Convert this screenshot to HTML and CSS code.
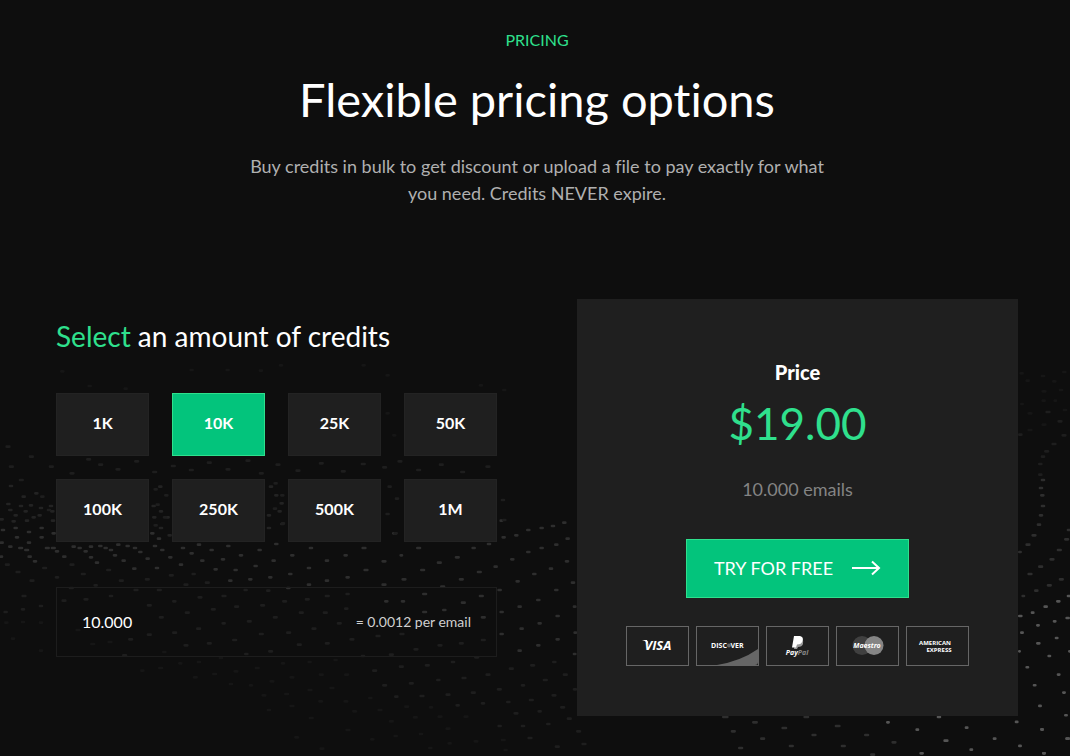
FILE: index.html
```html
<!DOCTYPE html>
<html lang="en">
<head>
    <meta charset="utf-8">
    <meta name="viewport" content="width=device-width, initial-scale=1">
    <title>Pricing</title>
    <link rel="stylesheet" href="styles.css">
</head>
<body>

<!-- dotted wave behind the section -->
<svg class="wave" viewBox="0 0 1070 756" preserveAspectRatio="xMidYMid slice" aria-hidden="true">
    <g transform="translate(0 480) scale(.3333)">
        <path class="dots dim" d="M30 18h6M68 50h6M106 40h6M22 72h6M60 78h6M90 76h6M28 90h6M74 94h6M120 84h6M150 78h6M44 106h6M98 112h6M154 94h6M2 118h6M38 124h6M78 122h6M116 106h6M156 122h6M478 20h6M458 78h6M480 94h6M460 112h6M500 112h6M826 46h6M842 70h6M810 20h6M836 94h6M804 106h6M844 132h6M804 144h6M480 144h6M506 166h6"/>
        <path class="dots mid" d="M6 150h6M44 144h6M84 156h6M122 144h6M158 160h6M2 188h6M48 172h6M84 188h6M122 172h6M28 200h6M58 204h8M76 210h8M138 204h8M156 204h8M168 214h6M2 230h4M86 230h6M102 244h6M190 230h6M218 200h6M236 204h6M254 214h6M270 200h6M270 232h6M288 248h6M298 198h6M314 204h6M330 210h6M352 194h6M342 226h6M368 242h6M380 198h6M402 204h6M418 216h6M440 236h6M400 266h6M462 198h6M484 210h6M508 232h6M468 264h6M540 254h6M546 204h6M572 220h6M594 194h6M604 242h6M632 210h6M644 268h6M666 238h6M682 198h6M704 270h6M720 226h6M764 258h6M776 210h6M818 242h6M826 192h6M874 226h6M868 282h6M924 264h6M930 204h6M978 242h6M1034 226h6M1040 292h6M978 302h6M924 314h6M808 292h6M862 324h6M748 298h6M688 302h6M454 160h6M474 176h6"/>
        <path class="dots faint" d="M18 254h8M50 276h8M130 264h8M92 302h8M168 292h6M212 254h8M246 282h8M322 270h8M360 302h8M438 298h8M510 286h8M578 282h6M554 314h8M618 308h8M284 316h6M210 324h8M404 330h8M474 330h8M734 330h6M802 332h6M68 348h8M14 396h6M66 388h6M120 378h6M188 362h8M254 358h8M330 348h6M444 376h8M520 364h6M596 352h8M668 348h8M558 398h8M636 388h8M706 380h8M784 376h8M850 364h8M918 358h8M978 348h8M1040 342h6M1036 386h6M972 398h8M900 398h8M822 412h8M744 424h8M668 430h6M592 446h8M520 458h8M480 412h8M700 480h8M780 462h8M624 490h8M862 458h8M938 446h8M1014 430h8M1052 478h8M978 490h8M894 494h8M808 514h8M736 522h6M554 496h8M444 464h8M388 478h8M370 526h8"/>
        <path class="dots ghost" d="M16 428h6M66 426h6M120 428h6M36 476h6M120 512h6M230 450h8M274 492h8M326 486h8M490 516h6M538 550h6M594 546h6M660 534h6M478 564h8M424 572h6M582 592h8M640 582h8M704 574h8M768 564h8M846 550h6M926 546h6M1004 540h6M1036 584h8M960 584h8M872 592h8M812 604h8M750 616h6M690 612h6M856 642h8M788 646h8M926 630h8M992 624h8M1034 664h8M958 664h8M872 678h8M804 690h6M930 714h8M1060 694h8M886 772h8M1040 750h8M962 806h8"/>
    </g>
    <g transform="translate(360 520) scale(.3333)">
        <path class="dots mid" d="M100 40h8M8 84h8M68 124h8M122 106h4M14 150h8M68 194h8M172 84h8M234 128h8M184 150h8M128 178h8M288 112h8M338 84h6M384 72h6M354 156h8M404 140h6M300 178h8M244 200h8M190 222h8M126 244h6M76 244h6M250 270h6M306 248h8M360 228h8M190 276h8M366 292h8M416 210h6M422 276h6M454 118h6M428 52h6M466 46h6M502 30h6M542 24h6M576 18h6M610 8h6M502 96h6M542 84h6M586 74h6M620 56h6M470 184h6M520 162h6M570 146h6M618 124h6M586 210h6M636 188h6M532 240h6M476 260h6M590 288h6M536 310h6M482 326h6M422 342h6M590 358h6M532 376h6M476 392h6M642 260h4M644 338h4M642 402h4M422 2h4"/>
        <path class="dots faint" d="M50 348h8M122 342h8M164 388h8M236 376h8M300 370h8M366 360h8M90 404h8M6 408h6M198 436h8M120 440h8M276 426h6M346 412h8M308 474h8M380 464h8M450 446h8M514 436h8M580 426h6M612 464h8M552 480h8M486 496h6M414 508h8M336 518h8M232 480h6M150 490h8M70 496h8M40 452h8M578 526h8M642 508h6M510 540h8M442 546h6M366 550h6M290 556h6M260 524h8M182 528h8M106 530h6M536 574h6M604 562h8M464 580h8M624 596h8M562 612h6M486 618h6M416 618h6M652 634h8M668 672h8M506 654h8M588 680h8"/>
        <path class="dots ghost" d="M28 534h6M56 570h8M136 560h8M210 562h6M90 604h8M162 592h8M236 590h8M314 590h8M260 626h8M180 642h6M104 648h6M34 658h6M344 664h8M426 660h8M266 670h6M208 684h6M434 690h6"/>
    </g>
    <g transform="translate(960 240) scale(.3333)">
        <path class="dots ghost" d="M182 400h6M200 422h6M246 408h6M280 424h6M310 396h6M248 454h8M300 450h6M206 520h8M184 492h4M248 482h6M312 510h6M284 482h4M206 570h8M248 554h8"/>
        <path class="dots faint" d="M260 516h8M296 544h8M308 586h8M278 612h8M256 634h8M246 650h6M238 672h6M178 584h6M238 704h6"/>
        <path class="dots mid" d="M246 720h6M240 744h6M244 766h6M246 798h6M240 826h6M234 854h6M218 886h8M200 914h8M178 936h4M316 898h8M324 870h4M294 930h8M272 958h8M238 980h8M206 1002h8M300 1018h8M264 1036h8M226 1052h6M188 1068h4"/>
        <path class="dots lit" d="M292 1084h6M254 1100h6M216 1118h4M178 1128h6M320 1134h6M282 1144h4M232 1156h4M184 1178h4M288 1194h4M232 1210h6M266 1248h4M200 1282h4M294 1304h4M222 1336h4M310 1358h4M238 1398h4M316 1426h4M168 1446h4M244 1468h4M178 1518h4M250 1540h4M320 1496h6M178 1234h1M324 1068h4M328 1234h2"/>
    </g>
    <g transform="translate(720 600) scale(.3333)">
        <path class="dots mid" d="M10 351h12M100 367h10M36 394h8M124 416h8M58 444h8M188 384h10M254 351h10M278 405h8M210 438h8M348 378h10M436 405h8M366 438h8M518 427h8M454 464h8"/>
        <path class="dots lit" d="M502 367h4M590 389h4M654 351h6M674 422h8M738 383h4M822 416h4M602 460h6M752 449h4M970 460h4M1040 416h6M965 389h3"/>
    </g>
    <g transform="translate(40 310) scale(.3333)">
        <path class="dots ghost" d="M64 184h6M146 228h6M254 236h6M452 180h6M560 180h6M660 182h6M720 166h6M968 166h6M1040 196h6M1040 310h6M1060 376h6M1320 226h6M1390 240h6"/>
        <path class="dots faint" d="M30 470h8M92 490h8M142 448h8M178 464h8M230 478h8M286 454h8M340 486h8M396 468h8M450 480h8M504 458h8M560 478h8M620 452h8M660 490h8M710 464h8M770 482h8M840 460h8M906 484h8M966 462h8M1030 472h8M1076 454h8M1132 480h8M1200 464h8M1264 486h8M1340 470h8M344 538h6M376 556h6M350 584h6M372 622h6M344 646h6M704 520h6M724 556h6M702 596h6M726 640h6M1046 530h6M1068 566h6M1040 612h6M1064 670h6M1386 570h6M1390 630h6M4 560h6M24 600h6M-60 510h8M-90 470h8M-30 440h8M-100 410h8"/>
    </g>
</svg>

<main class="pricing">
    <header class="intro">
        <p class="eyebrow">PRICING</p>
        <h1>Flexible pricing options</h1>
        <p class="lead">Buy credits in bulk to get discount or upload a file to pay exactly for what you need. Credits NEVER expire.</p>
    </header>

    <div class="columns">
        <section class="credits">
            <h2><span class="green">Select</span> an amount of credits</h2>
            <div class="amounts">
                <button type="button" class="amount">1K</button>
                <button type="button" class="amount active" aria-pressed="true">10K</button>
                <button type="button" class="amount">25K</button>
                <button type="button" class="amount">50K</button>
                <button type="button" class="amount">100K</button>
                <button type="button" class="amount">250K</button>
                <button type="button" class="amount">500K</button>
                <button type="button" class="amount">1M</button>
            </div>
            <div class="custom">
                <input type="text" id="credits" name="credits" value="10.000">
                <label for="credits">= 0.0012 per email</label>
            </div>
        </section>

        <section class="card">
            <h3>Price</h3>
            <p class="price">$19.00</p>
            <p class="emails">10.000 emails</p>
            <button type="button" class="try">
                TRY FOR FREE
                <svg class="arrow" viewBox="0 0 30 16" aria-hidden="true"><path d="M1 8h27M21 1.500l7 6.500-7 6.500"/></svg>
            </button>
            <ul class="payments">
                <li>
                    <svg viewBox="0 0 61 38" role="img" aria-label="Visa">
                        <text x="31" y="23" class="logo visa-text">VISA</text>
                        <path fill="#fff" d="M15 13h5l2 6q-2-5-7-6z"/>
                    </svg>
                </li>
                <li>
                    <svg viewBox="0 0 61 38" role="img" aria-label="Discover">
                        <path fill="#666" d="M20 38Q44 34 61 22v13q0 3-3 3z"/>
                        <text x="22" y="21" class="logo discover-text">DISC</text>
                        <circle cx="32" cy="18.500" r="2" fill="#666"/>
                        <text x="40" y="21" class="logo discover-text">VER</text>
                    </svg>
                </li>
                <li>
                    <svg viewBox="0 0 61 38" role="img" aria-label="PayPal">
                        <path fill="#999" d="M29 12h6q2 2 1 5-1 3-5 3l-1 2h-3z"/>
                        <path fill="#fff" d="M27 9h6q4 1 2.500 5-1 3.500-5.500 3.500l-1 3h-4z"/>
                        <text x="30" y="28" class="logo paypal-text">Pay<tspan fill="#888">Pal</tspan></text>
                    </svg>
                </li>
                <li>
                    <svg viewBox="0 0 61 38" role="img" aria-label="Maestro">
                        <circle cx="25" cy="18.500" r="9.500" fill="#404040"/>
                        <circle cx="37" cy="18.500" r="9.500" fill="#858585"/>
                        <text x="30" y="21" class="logo maestro-text">Maestro</text>
                    </svg>
                </li>
                <li>
                    <svg viewBox="0 0 61 38" role="img" aria-label="American Express">
                        <text x="28" y="18" class="logo amex-text">AMERICAN</text>
                        <text x="32" y="25" class="logo amex-text">EXPRESS</text>
                    </svg>
                </li>
            </ul>
        </section>
    </div>
</main>

</body>
</html>
```

FILE: styles.css
```css
* {
  box-sizing: border-box;
}
body {
  margin: 0;
  min-height: 100vh;
  background-color: #0e0e0e;
  color: white;
  font-family: Lato, "Open Sans", sans-serif;
  font-variant-ligatures: none;
}
h1, h2, h3, p, ul {
  margin: 0;
  padding: 0;
  font-weight: normal;
}
button, input {
  font-family: inherit;
  color: inherit;
}

/* background dots */
.wave {
  position: absolute;
  top: 0;
  left: 0;
  width: 100%;
  height: 100%;
  z-index: -1;
}
.dots {
  fill: none;
  stroke-width: 8px;
  stroke-linecap: round;
}
.ghost {
  stroke: #161616;
}
.faint {
  stroke: #1e1e1e;
}
.dim {
  stroke: #232323;
}
.mid {
  stroke: #2e2e2e;
}
.lit {
  stroke: #555;
}

.pricing {
  padding: 28px 52px 40px 56px;
}
.intro {
  text-align: center;
}
.eyebrow {
  color: #2fe08d;
  font-size: 16px;
  line-height: 24px;
}
h1 {
  margin-top: 19px;
  font-size: 47px;
  line-height: 56px;
}
.lead {
  max-width: 600px;
  margin: 26px auto 0;
  color: #b0b0b0;
  font-size: 18px;
  line-height: 27px;
}

.columns {
  display: grid;
  grid-template-columns: 1fr 1fr;
  gap: 80px;
  margin-top: 92px;
}
.credits {
  padding-top: 20px;
}
h2 {
  font-size: 28px;
  line-height: 34px;
}
.green {
  color: #2fe08d;
}
.amounts {
  display: grid;
  grid-template-columns: repeat(4, 1fr);
  gap: 23px;
  margin-top: 40px;
}
.amount {
  height: 63px;
  padding: 0 0 4px;
  border: 1px solid #232323;
  background-color: #1f1f1f;
  font-size: 16px;
  font-weight: bold;
  cursor: pointer;
}
.amount.active {
  border-color: #2fe08d;
  background-color: #03c47c;
}
.custom {
  display: flex;
  align-items: center;
  justify-content: space-between;
  height: 70px;
  margin-top: 45px;
  padding: 0 25px 2px;
  border: 1px solid #1d1d1d;
}
.custom input {
  min-width: 0;
  width: 120px;
  padding: 0;
  border: 0;
  background: none;
  font-size: 16px;
}
.custom label {
  color: #d0d0d0;
  font-size: 14px;
}

.card {
  display: flex;
  flex-direction: column;
  align-items: center;
  padding: 60px 20px 50px;
  background-color: #1f1f1f;
}
h3 {
  font-size: 20px;
  line-height: 26px;
  font-weight: 900;
}
.price {
  margin-top: 10px;
  color: #2fe08d;
  font-size: 44px;
  line-height: 56px;
}
.emails {
  margin-top: 26px;
  color: #848484;
  font-size: 18px;
  line-height: 24px;
}
.try {
  display: flex;
  align-items: center;
  gap: 18px;
  height: 59px;
  margin-top: 38px;
  padding: 0 27px 2px;
  border: 1px solid #2fe08d;
  background-color: #03c47c;
  font-size: 18px;
  cursor: pointer;
}
.arrow {
  width: 30px;
  height: 16px;
  fill: none;
  stroke: white;
  stroke-width: 2px;
}
.payments {
  display: flex;
  gap: 7px;
  margin-top: 28px;
  list-style: none;
}
.payments li {
  width: 63px;
  height: 40px;
  border: 1px solid #666;
}
.payments svg {
  display: block;
  width: 100%;
  height: 100%;
}
.logo {
  fill: white;
  text-anchor: middle;
  font-family: "Open Sans", sans-serif;
  font-weight: bold;
}
.visa-text {
  font-size: 13px;
  font-style: italic;
}
.discover-text {
  font-size: 7px;
}
.paypal-text {
  font-size: 7px;
  font-style: italic;
}
.maestro-text {
  font-size: 7px;
  font-style: italic;
}
.amex-text {
  font-size: 6px;
}
```
